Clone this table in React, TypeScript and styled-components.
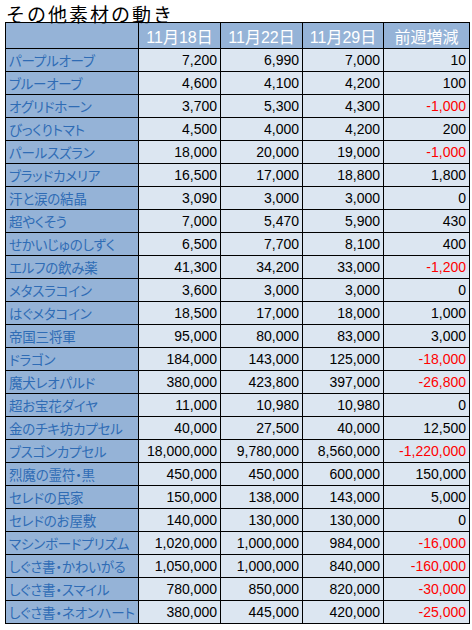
import React from "react";
import styled, { createGlobalStyle } from "styled-components";

const GlobalStyle = createGlobalStyle`
	body {
		margin: 0;
		background: #ffffff;
		font-family: "Liberation Sans", "Noto Sans CJK JP", sans-serif;
	}
`;

const Page = styled.div`
	padding: 0 0 0 5px;
`;

const Title = styled.h1`
	margin: 0 0 -6px 0;
	padding-left: 1px;
	line-height: 28px;
	font-family: "Noto Sans CJK JP", sans-serif;
	font-weight: normal;
	font-size: 19px;
	letter-spacing: 2px;
	color: #000;
`;

const Sheet = styled.table`
	border-collapse: collapse;
	table-layout: fixed;
	width: 464px;
	td,
	th {
		border: 1px solid #000;
		padding: 0;
		overflow: hidden;
		white-space: nowrap;
	}
`;

const HeadRow = styled.tr`
	height: 26px;
`;

const Row = styled.tr`
	height: 23px;
`;

const HeadCell = styled.th`
	background: #95b3d7;
	color: #fff;
	font-size: 16px;
	font-weight: normal;
	text-align: center;
	font-family: "Liberation Sans", "Noto Sans CJK JP", sans-serif;
`;

const NameCell = styled.td`
	background: #95b3d7;
	color: #2f6cb5;
	font-family: "Noto Sans CJK JP", sans-serif;
	font-size: 13.5px;
	font-feature-settings: "palt";
	letter-spacing: -0.2px;
	padding-left: 3px !important;
	text-align: left;
`;

const NumCell = styled.td<{ $neg?: boolean }>`
	background: #dce6f1;
	color: ${(p) => (p.$neg ? "#ff0000" : "#000")};
	font-size: 14px;
	text-align: right;
	padding-right: 3px !important;
`;

type Item = [string, string, string, string, string];

const items: Item[] = [
	["パープルオーブ", "7,200", "6,990", "7,000", "10"],
	["ブルーオーブ", "4,600", "4,100", "4,200", "100"],
	["オグリドホーン", "3,700", "5,300", "4,300", "-1,000"],
	["びっくりトマト", "4,500", "4,000", "4,200", "200"],
	["パールスズラン", "18,000", "20,000", "19,000", "-1,000"],
	["ブラッドカメリア", "16,500", "17,000", "18,800", "1,800"],
	["汗と涙の結晶", "3,090", "3,000", "3,000", "0"],
	["超やくそう", "7,000", "5,470", "5,900", "430"],
	["せかいじゅのしずく", "6,500", "7,700", "8,100", "400"],
	["エルフの飲み薬", "41,300", "34,200", "33,000", "-1,200"],
	["メタスラコイン", "3,600", "3,000", "3,000", "0"],
	["はぐメタコイン", "18,500", "17,000", "18,000", "1,000"],
	["帝国三将軍", "95,000", "80,000", "83,000", "3,000"],
	["ドラゴン", "184,000", "143,000", "125,000", "-18,000"],
	["魔犬レオパルド", "380,000", "423,800", "397,000", "-26,800"],
	["超お宝花ダイヤ", "11,000", "10,980", "10,980", "0"],
	["金のチキ坊カプセル", "40,000", "27,500", "40,000", "12,500"],
	["ブスゴンカプセル", "18,000,000", "9,780,000", "8,560,000", "-1,220,000"],
	["烈魔の霊符・黒", "450,000", "450,000", "600,000", "150,000"],
	["セレドの民家", "150,000", "138,000", "143,000", "5,000"],
	["セレドのお屋敷", "140,000", "130,000", "130,000", "0"],
	["マシンボードプリズム", "1,020,000", "1,000,000", "984,000", "-16,000"],
	["しぐさ書・かわいがる", "1,050,000", "1,000,000", "840,000", "-160,000"],
	["しぐさ書・スマイル", "780,000", "850,000", "820,000", "-30,000"],
	["しぐさ書・ネオンハート", "380,000", "445,000", "420,000", "-25,000"],
];

const App = () => {
	return (
		<Page>
			<GlobalStyle />
			<Title>その他素材の動き</Title>
			<Sheet>
				<colgroup>
					<col style={{ width: 133 }} />
					<col style={{ width: 82 }} />
					<col style={{ width: 82 }} />
					<col style={{ width: 81 }} />
					<col style={{ width: 86 }} />
				</colgroup>
				<thead>
					<HeadRow>
						<HeadCell></HeadCell>
						<HeadCell>11月18日</HeadCell>
						<HeadCell>11月22日</HeadCell>
						<HeadCell>11月29日</HeadCell>
						<HeadCell>前週増減</HeadCell>
					</HeadRow>
				</thead>
				<tbody>
					{items.map((it) => (
						<Row key={it[0]}>
							<NameCell>{it[0]}</NameCell>
							<NumCell>{it[1]}</NumCell>
							<NumCell>{it[2]}</NumCell>
							<NumCell>{it[3]}</NumCell>
							<NumCell $neg={it[4].startsWith("-")}>{it[4]}</NumCell>
						</Row>
					))}
				</tbody>
			</Sheet>
		</Page>
	);
};

export default App;
